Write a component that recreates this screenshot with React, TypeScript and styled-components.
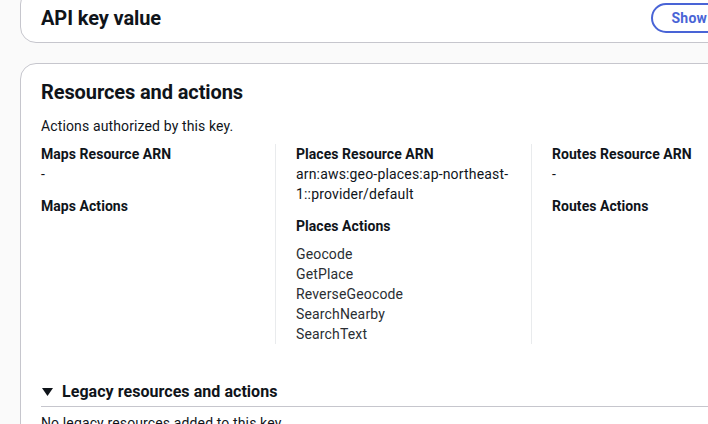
import React from "react";
import styled, { createGlobalStyle } from "styled-components";

const GlobalStyle = createGlobalStyle`
  html, body {
    margin: 0;
    padding: 0;
    overflow: hidden;
    background: #fafafa;
  }
  body {
    font-family: Roboto, "Liberation Sans", Arial, sans-serif;
    color: #0f141a;
    -webkit-font-smoothing: antialiased;
  }
`;

const Page = styled.main`
  display: flex;
  flex-direction: column;
  gap: 20px;
  width: 729px;
  margin-top: -12px;
  padding-left: 20px;
`;

const Card = styled.section`
  background: #ffffff;
  border: 1px solid #c6c6cd;
  border-radius: 16px;
`;

const CardHeader = styled.header<{ $top: number; $bottom: number }>`
  display: flex;
  align-items: center;
  justify-content: space-between;
  padding: ${(p) => p.$top}px 20px ${(p) => p.$bottom}px 20px;
`;

const Title = styled.h2`
  margin: 0;
  font-size: 20px;
  line-height: 24px;
  font-weight: 700;
  letter-spacing: -0.1px;
  color: #0f141a;
`;

const ShowButton = styled.button`
  font-family: inherit;
  font-size: 14px;
  font-weight: 700;
  line-height: 20px;
  letter-spacing: 0.2px;
  color: #4964d6;
  background: #ffffff;
  border: 2px solid #4964d6;
  border-radius: 20px;
  padding: 3px 19px;
  cursor: pointer;
`;

const CardBody = styled.div`
  padding: 0 20px 20px 20px;
`;

const Description = styled.p`
  margin: 12px 0 0 0;
  font-size: 14px;
  line-height: 20px;
  letter-spacing: 0.13px;
`;

const Columns = styled.div`
  display: grid;
  grid-template-columns: 234px 256px 1fr;
  margin-top: 8px;
`;

const Column = styled.div<{ $divider?: boolean }>`
  display: flex;
  flex-direction: column;
  padding-left: ${(p) => (p.$divider ? 20 : 0)}px;
  border-left: ${(p) => (p.$divider ? "1px solid #e9ebed" : "none")};
`;

const Label = styled.div<{ $gap?: number }>`
  font-size: 14px;
  line-height: 20px;
  font-weight: 700;
  letter-spacing: 0.05px;
  margin-top: ${(p) => p.$gap ?? 0}px;
`;

const Value = styled.div`
  font-size: 14px;
  line-height: 20px;
  letter-spacing: 0.17px;
  color: #0f141a;
  max-width: 222px;
`;

const ActionList = styled.ul`
  list-style: none;
  margin: 8px 0 0 0;
  padding: 0;
`;

const ActionItem = styled.li`
  font-size: 14px;
  line-height: 20px;
  letter-spacing: 0.15px;
  color: #2a2e33;
`;

const Expandable = styled.div`
  margin-top: 38px;
`;

const ExpandHeader = styled.div`
  display: flex;
  align-items: center;
  gap: 9px;
  padding: 0 0 4px 1px;
  border-bottom: 1px solid #c6c6cd;
`;

const ExpandTitle = styled.span`
  font-size: 16px;
  line-height: 20px;
  font-weight: 700;
  letter-spacing: 0.05px;
`;

const Caret = styled.svg`
  display: block;
  width: 11px;
  height: 8px;
  margin-top: -1px;
`;

const ExpandContent = styled.div`
  padding-top: 6px;
  font-size: 14px;
  line-height: 20px;
  letter-spacing: 0.13px;
`;

const placesActions = ["Geocode", "GetPlace", "ReverseGeocode", "SearchNearby", "SearchText"];

export default function App() {
  return (
    <>
      <GlobalStyle />
      <Page>
        <Card>
          <CardHeader $top={14} $bottom={9}>
            <Title>API key value</Title>
            <ShowButton type="button">Show</ShowButton>
          </CardHeader>
        </Card>

        <Card>
          <CardHeader $top={16} $bottom={0}>
            <Title>Resources and actions</Title>
          </CardHeader>
          <CardBody>
            <Description>Actions authorized by this key.</Description>
            <Columns>
              <Column>
                <Label>Maps Resource ARN</Label>
                <Value>-</Value>
                <Label $gap={12}>Maps Actions</Label>
              </Column>
              <Column $divider>
                <Label>Places Resource ARN</Label>
                <Value>arn:aws:geo-places:ap-northeast-1::provider/default</Value>
                <Label $gap={12}>Places Actions</Label>
                <ActionList>
                  {placesActions.map((a) => (
                    <ActionItem key={a}>{a}</ActionItem>
                  ))}
                </ActionList>
              </Column>
              <Column $divider>
                <Label>Routes Resource ARN</Label>
                <Value>-</Value>
                <Label $gap={12}>Routes Actions</Label>
              </Column>
            </Columns>

            <Expandable>
              <ExpandHeader>
                <Caret viewBox="0 0 11 8" aria-hidden="true">
                  <polygon points="0,0 11,0 5.5,8" fill="#0f141a" />
                </Caret>
                <ExpandTitle>Legacy resources and actions</ExpandTitle>
              </ExpandHeader>
              <ExpandContent>No legacy resources added to this key.</ExpandContent>
            </Expandable>
          </CardBody>
        </Card>
      </Page>
    </>
  );
}
